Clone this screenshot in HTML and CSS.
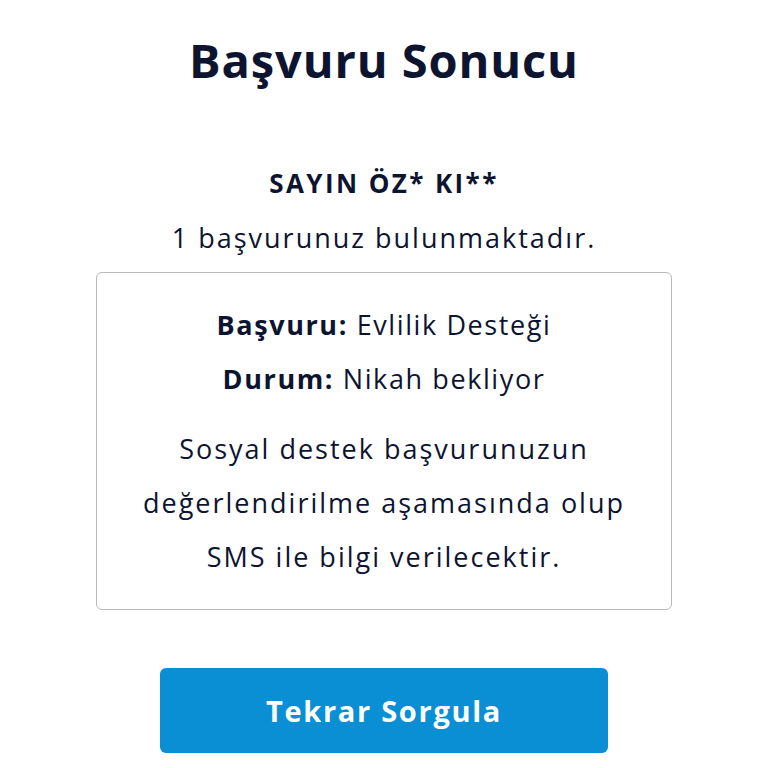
FILE: index.html
```html
<!DOCTYPE html>
<html lang="tr">
<head>
<meta charset="utf-8">
<link rel="stylesheet" href="styles.css">
</head>
<body>
<main class="page">
  <h1 class="title">Başvuru Sonucu</h1>
  <p class="name">SAYIN ÖZ* KI**</p>
  <p class="count">1 başvurunuz bulunmaktadır.</p>
  <section class="card">
    <p class="row"><strong>Başvuru:</strong> Evlilik Desteği</p>
    <p class="row"><strong>Durum:</strong> Nikah bekliyor</p>
    <p class="info">Sosyal destek başvurunuzun değerlendirilme aşamasında olup SMS ile bilgi verilecektir.</p>
  </section>
  <button class="btn" type="button">Tekrar Sorgula</button>
</main>
</body>
</html>
```
FILE: styles.css
```css
html, body {
  margin: 0;
  padding: 0;
  background: #ffffff;
}
body {
  font-family: "Open Sans", "Liberation Sans", sans-serif;
  color: #0d1430;
}
.page {
  display: flex;
  flex-direction: column;
  align-items: center;
  padding-top: 30px;
  text-align: center;
}
.title {
  margin: 0;
  font-size: 47px;
  line-height: 60px;
  font-weight: 700;
  letter-spacing: 0.9px;
}
.name {
  margin: 73px 0 0;
  font-size: 26px;
  line-height: 40px;
  font-weight: 700;
  letter-spacing: 2.4px;
}
.count {
  margin: 15px 0 0;
  font-size: 27px;
  line-height: 40px;
  font-weight: 400;
  letter-spacing: 2px;
}
.card {
  box-sizing: border-box;
  width: 576px;
  margin-top: 14px;
  padding: 25px 28px;
  border: 1px solid #b9b9b9;
  border-radius: 6px;
}
.row {
  margin: 0;
  font-size: 27px;
  line-height: 54px;
  letter-spacing: 1.6px;
}
.row strong {
  font-weight: 700;
}
.info {
  margin: 16px 0 0;
  font-size: 27px;
  line-height: 54px;
  letter-spacing: 2px;
}
.btn {
  width: 448px;
  height: 85px;
  margin-top: 58px;
  border: 0;
  border-radius: 6px;
  background: #0b8fd4;
  color: #ffffff;
  font-family: "Open Sans", "Liberation Sans", sans-serif;
  font-size: 29px;
  font-weight: 700;
  letter-spacing: 1.7px;
}
```
